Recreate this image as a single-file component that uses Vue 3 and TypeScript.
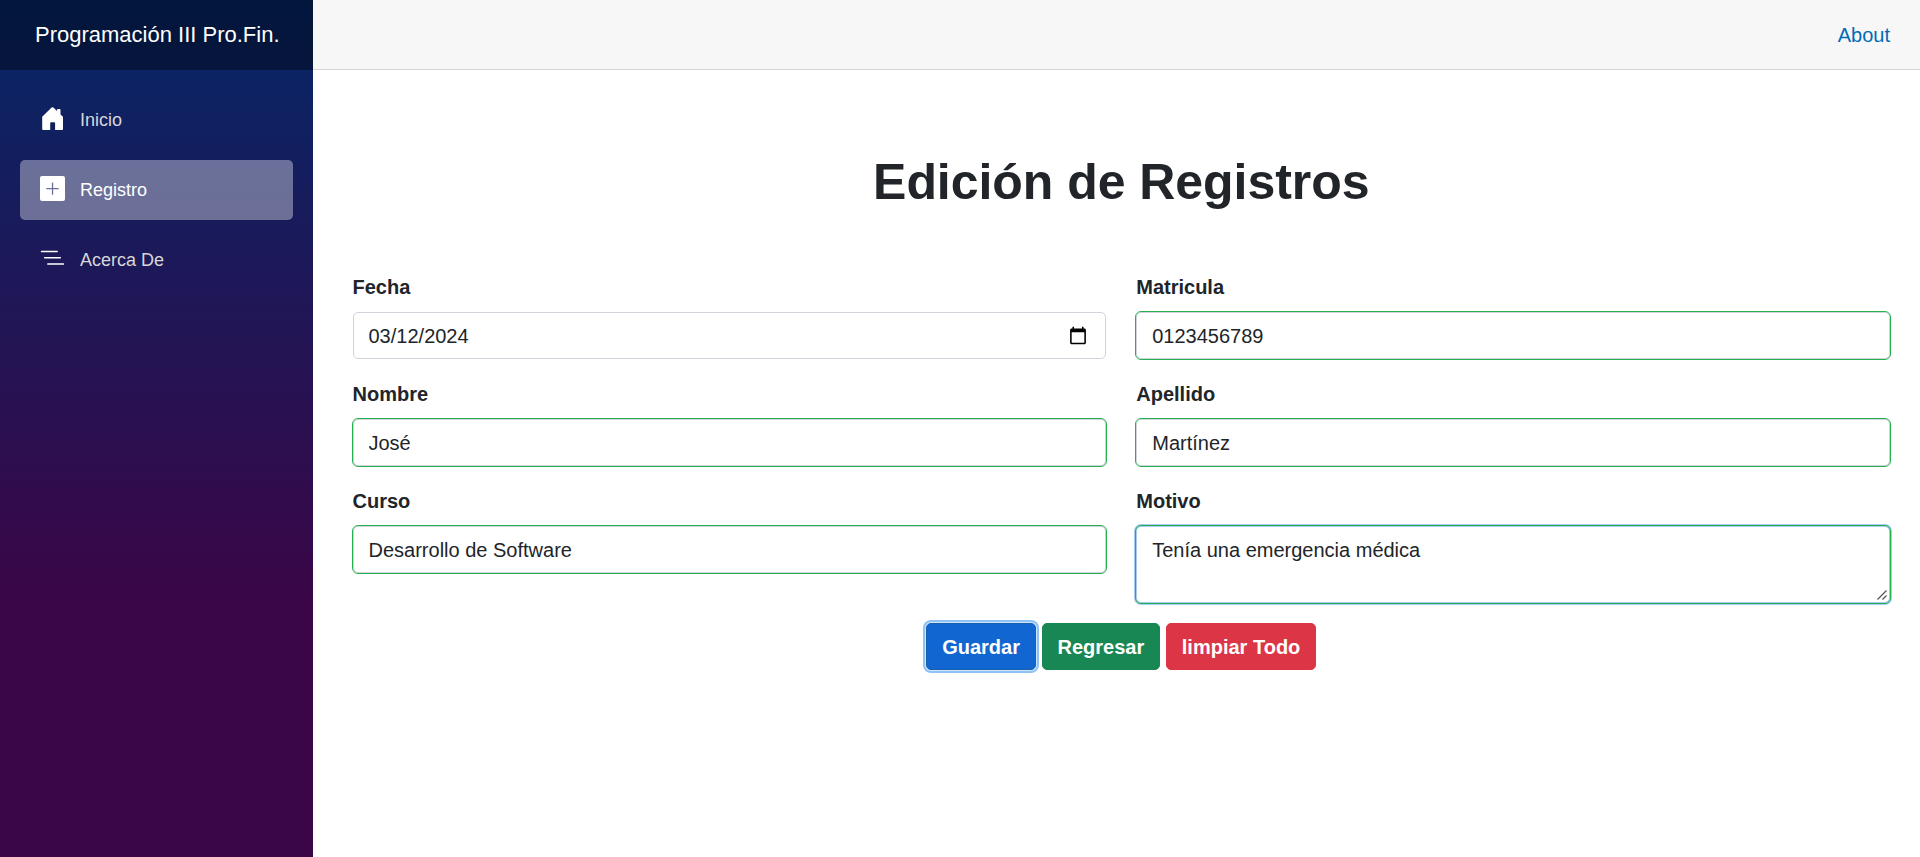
<script setup lang="ts">
import { ref } from 'vue'

interface Registro {
  fecha: string
  matricula: string
  nombre: string
  apellido: string
  curso: string
  motivo: string
}

const registro = ref<Registro>({
  fecha: '2024-03-12',
  matricula: '0123456789',
  nombre: 'José',
  apellido: 'Martínez',
  curso: 'Desarrollo de Software',
  motivo: 'Tenía una emergencia médica',
})
</script>

<template>
  <div class="page">
    <aside class="sidebar">
      <div class="brand"><a>Programación III Pro.Fin.</a></div>
      <nav>
        <a class="nav-link">
          <svg class="icon" viewBox="0 0 25 25" fill="#fff">
            <path d="M2.200 10.800L11.600 1.600q.9-.7 1.800 0L17 5V3.800q0-.8.8-.8h1.900q.8 0 .8.8v4.700l2.500 2.300V23q0 .9-.9.9H15.100V17.200q0-.9-.9-.9h-3.100q-.9 0-.9.900V23.900H3.100q-.9 0-.9-.9z" />
          </svg>
          Inicio
        </a>
        <a class="nav-link active">
          <svg class="icon" viewBox="0 0 25 25" fill="#fff">
            <path fill-rule="evenodd" d="M2 0h21a2 2 0 0 1 2 2v21a2 2 0 0 1-2 2H2a2 2 0 0 1-2-2V2a2 2 0 0 1 2-2zM11.900 6.500v5.400H6.300v1.300h5.600v5.500h1.300v-5.500h5.500v-1.300h-5.500V6.500z" />
          </svg>
          Registro
        </a>
        <a class="nav-link">
          <svg class="icon" viewBox="0 0 16 16" fill="#fff">
            <path fill-rule="evenodd" d="M4.500 11.500A.5.5 0 0 1 5 11h10a.5.5 0 0 1 0 1H5a.5.5 0 0 1-.5-.5zm-2-4A.5.5 0 0 1 3 7h10a.5.5 0 0 1 0 1H3a.5.5 0 0 1-.5-.5zm-2-4A.5.5 0 0 1 1 3h10a.5.5 0 0 1 0 1H1a.5.5 0 0 1-.5-.5z" />
          </svg>
          Acerca De
        </a>
      </nav>
    </aside>
    <main>
      <header class="top-row"><a>About</a></header>
      <article>
        <h1>Edición de Registros</h1>
        <form class="fields" @submit.prevent>
          <label class="field"><span>Fecha</span><input v-model="registro.fecha" type="date" /></label>
          <label class="field"><span>Matricula</span><input v-model="registro.matricula" class="valid" /></label>
          <label class="field"><span>Nombre</span><input v-model="registro.nombre" class="valid" /></label>
          <label class="field"><span>Apellido</span><input v-model="registro.apellido" class="valid" /></label>
          <label class="field"><span>Curso</span><input v-model="registro.curso" class="valid" /></label>
          <label class="field">
            <span>Motivo</span>
            <textarea v-model="registro.motivo" class="valid focused"></textarea>
            <svg class="grip" viewBox="0 0 10 10" stroke="#555" stroke-width="1.3">
              <path d="M.5 9.500L9.500 .5M5.500 9.500L9.500 5.500" />
            </svg>
          </label>
        </form>
        <div class="actions">
          <button class="save">Guardar</button>
          <button class="back">Regresar</button>
          <button class="clear">limpiar Todo</button>
        </div>
      </article>
    </main>
  </div>
</template>

<style>
body { margin: 0; }
</style>

<style scoped>
* { box-sizing: border-box; }
.page {
  display: flex;
  height: 857px;
  overflow: hidden;
  background: #fff;
  color: #212529;
  font: 20px/30px "Liberation Sans", Arial, sans-serif;
}
.sidebar {
  flex: 0 0 312.5px;
  background: linear-gradient(180deg, rgb(5, 39, 103) 0%, #3a0647 70%);
}
.brand {
  display: flex;
  align-items: center;
  height: 70px;
  padding-left: 35px;
  background: rgba(0, 0, 0, 0.4);
  color: #fff;
  font-size: 22px;
  white-space: nowrap;
}
nav {
  display: flex;
  flex-direction: column;
  gap: 10px;
  padding: 20px;
}
.nav-link {
  display: flex;
  align-items: center;
  height: 60px;
  padding: 0 20px;
  border-radius: 5px;
  color: #d7d7d7;
  font-size: 18px;
}
.nav-link.active {
  background: rgba(255, 255, 255, 0.37);
  color: #fff;
}
.icon {
  width: 25px;
  height: 25px;
  margin: -3px 15px 0 0;
}
main { flex: 1; min-width: 0; }
.top-row {
  display: flex;
  align-items: center;
  justify-content: flex-end;
  height: 70px;
  padding-right: 30px;
  border-bottom: 1px solid #d6d5d5;
  background: #f7f7f7;
}
.top-row a { color: #006bb7; }
article { padding: 82px 30px 0 40px; }
h1 {
  margin: 0 0 60px;
  font-size: 50px;
  line-height: 60px;
  font-weight: 700;
  letter-spacing: -0.05px;
  text-align: center;
}
.fields {
  display: grid;
  grid-template-columns: 1fr 1fr;
  gap: 20px 30px;
  align-items: start;
}
.field {
  position: relative;
  display: flex;
  flex-direction: column;
}
.field span { margin-bottom: 10px; font-weight: 700; }
input, textarea {
  display: block;
  width: 100%;
  height: 47px;
  margin: 0;
  padding: 8px 15px 7px;
  border: 1px solid #ced4da;
  border-radius: 5px;
  background: #fff;
  color: #212529;
  font: inherit;
}
input::-webkit-datetime-edit,
input::-webkit-datetime-edit-fields-wrapper,
input::-webkit-datetime-edit-month-field,
input::-webkit-datetime-edit-day-field,
input::-webkit-datetime-edit-year-field { padding: 0; }
textarea { height: 77px; padding: 7.5px 15px; resize: none; }
.grip {
  position: absolute;
  right: 3px;
  bottom: 3px;
  width: 10px;
  height: 10px;
}
.valid { outline: 1px solid #26b050; }
.focused { border-color: #a9c9ef; box-shadow: 0 0 0 2px #a5cdf3; }
.actions {
  display: flex;
  justify-content: center;
  gap: 5.56px;
  margin-top: 20px;
}
button {
  height: 47px;
  margin: 0;
  padding: 0 15px;
  border: 1px solid;
  border-radius: 5px;
  color: #fff;
  font: 700 20px/30px "Liberation Sans", Arial, sans-serif;
}
.save {
  background: #1266d1;
  border-color: #1861ac;
  box-shadow: 0 0 0 1px #d0e4fa, 0 0 0 3px #8fc2f7;
}
.back { background: #198754; border-color: #198754; }
.clear { background: #dc3545; border-color: #dc3545; }
</style>
